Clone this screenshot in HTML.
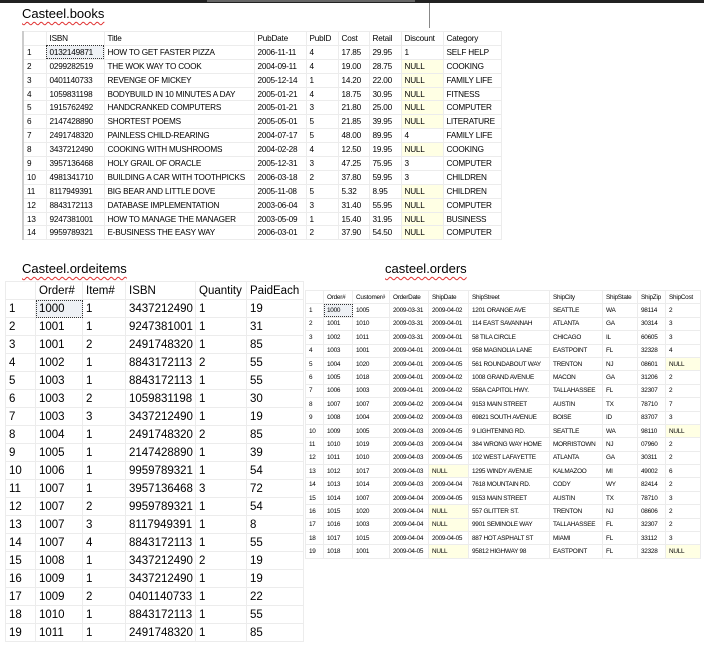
<!DOCTYPE html>
<html><head><meta charset="utf-8"><style>
body{margin:0;width:704px;height:656px;background:#fff;position:relative;overflow:hidden;font-family:"Liberation Sans",Arial,sans-serif;color:#000}
.bar{position:absolute;left:0;top:0;width:704px;height:3px;background:#222}
.bar2{position:absolute;left:207px;top:0;width:208px;height:2px;background:#666}
.vl{position:absolute;left:429px;top:3px;width:1px;height:25px;background:#888}
.ttl{position:absolute;font-size:13px;text-decoration:underline wavy #e03030;text-decoration-thickness:1px;text-underline-offset:3px}
table{position:absolute;border-collapse:collapse;table-layout:fixed}
td{border:1px solid #ececec;padding:0 0 0 3px;white-space:nowrap;overflow:hidden}
td.n{background:#ffffe4}
td.s{outline:1px dotted #333;outline-offset:-1px;background:#eef1f5}
#b{left:22px;top:31px;font-size:8.2px;letter-spacing:-0.2px;border-left:2px solid #ccc}
#b tr{height:13.9px}
#i{left:5px;top:281px;font-size:11.5px}
#i tr{height:18px}
#o{left:305px;top:290px;font-size:6.4px;letter-spacing:-0.25px}
#o tr{height:13.4px}
</style></head><body>
<div class="bar"></div><div class="bar2"></div><div class="vl"></div>
<div class="ttl" style="left:22px;top:6px">Casteel.books</div>
<table id="b">
<colgroup><col style="width:23px"><col style="width:58px"><col style="width:150px"><col style="width:52px"><col style="width:32px"><col style="width:31px"><col style="width:32px"><col style="width:42px"><col style="width:58px"></colgroup>
<tr><td></td><td>ISBN</td><td>Title</td><td>PubDate</td><td>PubID</td><td>Cost</td><td>Retail</td><td>Discount</td><td>Category</td></tr>
<tr><td>1</td><td class="s">0132149871</td><td>HOW TO GET FASTER PIZZA</td><td>2006-11-11</td><td>4</td><td>17.85</td><td>29.95</td><td>1</td><td>SELF HELP</td></tr>
<tr><td>2</td><td>0299282519</td><td>THE WOK WAY TO COOK</td><td>2004-09-11</td><td>4</td><td>19.00</td><td>28.75</td><td class="n">NULL</td><td>COOKING</td></tr>
<tr><td>3</td><td>0401140733</td><td>REVENGE OF MICKEY</td><td>2005-12-14</td><td>1</td><td>14.20</td><td>22.00</td><td class="n">NULL</td><td>FAMILY LIFE</td></tr>
<tr><td>4</td><td>1059831198</td><td>BODYBUILD IN 10 MINUTES A DAY</td><td>2005-01-21</td><td>4</td><td>18.75</td><td>30.95</td><td class="n">NULL</td><td>FITNESS</td></tr>
<tr><td>5</td><td>1915762492</td><td>HANDCRANKED COMPUTERS</td><td>2005-01-21</td><td>3</td><td>21.80</td><td>25.00</td><td class="n">NULL</td><td>COMPUTER</td></tr>
<tr><td>6</td><td>2147428890</td><td>SHORTEST POEMS</td><td>2005-05-01</td><td>5</td><td>21.85</td><td>39.95</td><td class="n">NULL</td><td>LITERATURE</td></tr>
<tr><td>7</td><td>2491748320</td><td>PAINLESS CHILD-REARING</td><td>2004-07-17</td><td>5</td><td>48.00</td><td>89.95</td><td>4</td><td>FAMILY LIFE</td></tr>
<tr><td>8</td><td>3437212490</td><td>COOKING WITH MUSHROOMS</td><td>2004-02-28</td><td>4</td><td>12.50</td><td>19.95</td><td class="n">NULL</td><td>COOKING</td></tr>
<tr><td>9</td><td>3957136468</td><td>HOLY GRAIL OF ORACLE</td><td>2005-12-31</td><td>3</td><td>47.25</td><td>75.95</td><td>3</td><td>COMPUTER</td></tr>
<tr><td>10</td><td>4981341710</td><td>BUILDING A CAR WITH TOOTHPICKS</td><td>2006-03-18</td><td>2</td><td>37.80</td><td>59.95</td><td>3</td><td>CHILDREN</td></tr>
<tr><td>11</td><td>8117949391</td><td>BIG BEAR AND LITTLE DOVE</td><td>2005-11-08</td><td>5</td><td>5.32</td><td>8.95</td><td class="n">NULL</td><td>CHILDREN</td></tr>
<tr><td>12</td><td>8843172113</td><td>DATABASE IMPLEMENTATION</td><td>2003-06-04</td><td>3</td><td>31.40</td><td>55.95</td><td class="n">NULL</td><td>COMPUTER</td></tr>
<tr><td>13</td><td>9247381001</td><td>HOW TO MANAGE THE MANAGER</td><td>2003-05-09</td><td>1</td><td>15.40</td><td>31.95</td><td class="n">NULL</td><td>BUSINESS</td></tr>
<tr><td>14</td><td>9959789321</td><td>E-BUSINESS THE EASY WAY</td><td>2006-03-01</td><td>2</td><td>37.90</td><td>54.50</td><td class="n">NULL</td><td>COMPUTER</td></tr>
</table>

<div class="ttl" style="left:22px;top:261px">Casteel.ordeitems</div>
<table id="i">
<colgroup><col style="width:30px"><col style="width:47px"><col style="width:43px"><col style="width:70px"><col style="width:51px"><col style="width:57px"></colgroup>
<tr><td></td><td>Order#</td><td>Item#</td><td>ISBN</td><td>Quantity</td><td>PaidEach</td></tr>
<tr><td>1</td><td class="s">1000</td><td>1</td><td>3437212490</td><td>1</td><td>19</td></tr>
<tr><td>2</td><td>1001</td><td>1</td><td>9247381001</td><td>1</td><td>31</td></tr>
<tr><td>3</td><td>1001</td><td>2</td><td>2491748320</td><td>1</td><td>85</td></tr>
<tr><td>4</td><td>1002</td><td>1</td><td>8843172113</td><td>2</td><td>55</td></tr>
<tr><td>5</td><td>1003</td><td>1</td><td>8843172113</td><td>1</td><td>55</td></tr>
<tr><td>6</td><td>1003</td><td>2</td><td>1059831198</td><td>1</td><td>30</td></tr>
<tr><td>7</td><td>1003</td><td>3</td><td>3437212490</td><td>1</td><td>19</td></tr>
<tr><td>8</td><td>1004</td><td>1</td><td>2491748320</td><td>2</td><td>85</td></tr>
<tr><td>9</td><td>1005</td><td>1</td><td>2147428890</td><td>1</td><td>39</td></tr>
<tr><td>10</td><td>1006</td><td>1</td><td>9959789321</td><td>1</td><td>54</td></tr>
<tr><td>11</td><td>1007</td><td>1</td><td>3957136468</td><td>3</td><td>72</td></tr>
<tr><td>12</td><td>1007</td><td>2</td><td>9959789321</td><td>1</td><td>54</td></tr>
<tr><td>13</td><td>1007</td><td>3</td><td>8117949391</td><td>1</td><td>8</td></tr>
<tr><td>14</td><td>1007</td><td>4</td><td>8843172113</td><td>1</td><td>55</td></tr>
<tr><td>15</td><td>1008</td><td>1</td><td>3437212490</td><td>2</td><td>19</td></tr>
<tr><td>16</td><td>1009</td><td>1</td><td>3437212490</td><td>1</td><td>19</td></tr>
<tr><td>17</td><td>1009</td><td>2</td><td>0401140733</td><td>1</td><td>22</td></tr>
<tr><td>18</td><td>1010</td><td>1</td><td>8843172113</td><td>1</td><td>55</td></tr>
<tr><td>19</td><td>1011</td><td>1</td><td>2491748320</td><td>1</td><td>85</td></tr>
</table>

<div class="ttl" style="left:385px;top:261px">casteel.orders</div>
<table id="o">
<colgroup><col style="width:18px"><col style="width:29px"><col style="width:37px"><col style="width:39px"><col style="width:40px"><col style="width:81px"><col style="width:53px"><col style="width:35px"><col style="width:28px"><col style="width:35px"></colgroup>
<tr><td></td><td>Order#</td><td>Customer#</td><td>OrderDate</td><td>ShipDate</td><td>ShipStreet</td><td>ShipCity</td><td>ShipState</td><td>ShipZip</td><td>ShipCost</td></tr>
<tr><td>1</td><td class="s">1000</td><td>1005</td><td>2009-03-31</td><td>2009-04-02</td><td>1201 ORANGE AVE</td><td>SEATTLE</td><td>WA</td><td>98114</td><td>2</td></tr>
<tr><td>2</td><td>1001</td><td>1010</td><td>2009-03-31</td><td>2009-04-01</td><td>114 EAST SAVANNAH</td><td>ATLANTA</td><td>GA</td><td>30314</td><td>3</td></tr>
<tr><td>3</td><td>1002</td><td>1011</td><td>2009-03-31</td><td>2009-04-01</td><td>58 TILA CIRCLE</td><td>CHICAGO</td><td>IL</td><td>60605</td><td>3</td></tr>
<tr><td>4</td><td>1003</td><td>1001</td><td>2009-04-01</td><td>2009-04-01</td><td>958 MAGNOLIA LANE</td><td>EASTPOINT</td><td>FL</td><td>32328</td><td>4</td></tr>
<tr><td>5</td><td>1004</td><td>1020</td><td>2009-04-01</td><td>2009-04-05</td><td>561 ROUNDABOUT WAY</td><td>TRENTON</td><td>NJ</td><td>08601</td><td class="n">NULL</td></tr>
<tr><td>6</td><td>1005</td><td>1018</td><td>2009-04-01</td><td>2009-04-02</td><td>1008 GRAND AVENUE</td><td>MACON</td><td>GA</td><td>31206</td><td>2</td></tr>
<tr><td>7</td><td>1006</td><td>1003</td><td>2009-04-01</td><td>2009-04-02</td><td>558A CAPITOL HWY.</td><td>TALLAHASSEE</td><td>FL</td><td>32307</td><td>2</td></tr>
<tr><td>8</td><td>1007</td><td>1007</td><td>2009-04-02</td><td>2009-04-04</td><td>9153 MAIN STREET</td><td>AUSTIN</td><td>TX</td><td>78710</td><td>7</td></tr>
<tr><td>9</td><td>1008</td><td>1004</td><td>2009-04-02</td><td>2009-04-03</td><td>69821 SOUTH AVENUE</td><td>BOISE</td><td>ID</td><td>83707</td><td>3</td></tr>
<tr><td>10</td><td>1009</td><td>1005</td><td>2009-04-03</td><td>2009-04-05</td><td>9 LIGHTENING RD.</td><td>SEATTLE</td><td>WA</td><td>98110</td><td class="n">NULL</td></tr>
<tr><td>11</td><td>1010</td><td>1019</td><td>2009-04-03</td><td>2009-04-04</td><td>384 WRONG WAY HOME</td><td>MORRISTOWN</td><td>NJ</td><td>07960</td><td>2</td></tr>
<tr><td>12</td><td>1011</td><td>1010</td><td>2009-04-03</td><td>2009-04-05</td><td>102 WEST LAFAYETTE</td><td>ATLANTA</td><td>GA</td><td>30311</td><td>2</td></tr>
<tr><td>13</td><td>1012</td><td>1017</td><td>2009-04-03</td><td class="n">NULL</td><td>1295 WINDY AVENUE</td><td>KALMAZOO</td><td>MI</td><td>49002</td><td>6</td></tr>
<tr><td>14</td><td>1013</td><td>1014</td><td>2009-04-03</td><td>2009-04-04</td><td>7618 MOUNTAIN RD.</td><td>CODY</td><td>WY</td><td>82414</td><td>2</td></tr>
<tr><td>15</td><td>1014</td><td>1007</td><td>2009-04-04</td><td>2009-04-05</td><td>9153 MAIN STREET</td><td>AUSTIN</td><td>TX</td><td>78710</td><td>3</td></tr>
<tr><td>16</td><td>1015</td><td>1020</td><td>2009-04-04</td><td class="n">NULL</td><td>557 GLITTER ST.</td><td>TRENTON</td><td>NJ</td><td>08606</td><td>2</td></tr>
<tr><td>17</td><td>1016</td><td>1003</td><td>2009-04-04</td><td class="n">NULL</td><td>9901 SEMINOLE WAY</td><td>TALLAHASSEE</td><td>FL</td><td>32307</td><td>2</td></tr>
<tr><td>18</td><td>1017</td><td>1015</td><td>2009-04-04</td><td>2009-04-05</td><td>887 HOT ASPHALT ST</td><td>MIAMI</td><td>FL</td><td>33112</td><td>3</td></tr>
<tr><td>19</td><td>1018</td><td>1001</td><td>2009-04-05</td><td class="n">NULL</td><td>95812 HIGHWAY 98</td><td>EASTPOINT</td><td>FL</td><td>32328</td><td class="n">NULL</td></tr>
</table>
</body></html>
